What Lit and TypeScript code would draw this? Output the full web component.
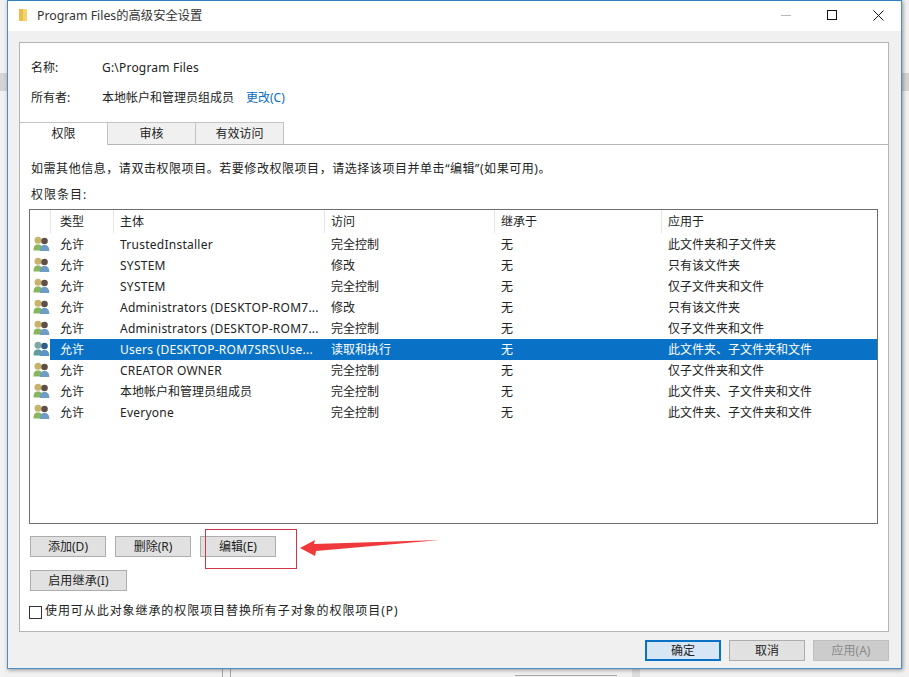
import { LitElement, html, css, svg } from "lit";
import { customElement } from "lit/decorators.js";

const rows = [
  ["允许", "TrustedInstaller", "完全控制", "无", "此文件夹和子文件夹"],
  ["允许", "SYSTEM", "修改", "无", "只有该文件夹"],
  ["允许", "SYSTEM", "完全控制", "无", "仅子文件夹和文件"],
  ["允许", "Administrators (DESKTOP-ROM7...", "修改", "无", "只有该文件夹"],
  ["允许", "Administrators (DESKTOP-ROM7...", "完全控制", "无", "仅子文件夹和文件"],
  ["允许", "Users (DESKTOP-ROM7SRS\\Use...", "读取和执行", "无", "此文件夹、子文件夹和文件"],
  ["允许", "CREATOR OWNER", "完全控制", "无", "仅子文件夹和文件"],
  ["允许", "本地帐户和管理员组成员", "完全控制", "无", "此文件夹、子文件夹和文件"],
  ["允许", "Everyone", "完全控制", "无", "此文件夹、子文件夹和文件"],
];

const userIcon = (sel: boolean) => svg`<svg class="uicon" width="17" height="16" viewBox="0 0 17 16">
  <circle cx="5" cy="4.300" r="3.500" fill="${sel ? "#7fa8a0" : "#c9b26a"}"/>
  <path d="M0.500 14.500c0-4.500 1.500-6 4.500-6s4.500 1.500 4.500 6z" fill="${sel ? "#5f9c9c" : "#86b75c"}"/>
  <circle cx="11.500" cy="5" r="3.300" fill="${sel ? "#2f5f88" : "#5e5048"}"/>
  <path d="M6.800 15c0-4.300 1.700-6 4.700-6s4.800 1.700 4.800 6z" fill="${sel ? "#5a94c8" : "#6f9cc4"}"/>
</svg>`;

@customElement("app-root")
export class AppRoot extends LitElement {
  static styles = css`
    :host {
      display: block;
      position: relative;
      width: 909px;
      height: 677px;
      overflow: hidden;
      background: #f1f1f1;
      font-family: "Noto Sans", "Noto Sans CJK SC", sans-serif;
      font-size: 12px;
      color: #222;
    }
    .bg { position: absolute; background: #d4d4d4; }
    .bg.left { left: 0; top: 73px; width: 7px; height: 18px; }
    .bg.right { right: 0; top: 73px; width: 7px; height: 18px; }
    .bg.v1 { left: 222px; top: 669px; width: 1px; height: 8px; background: #a8a8a8; }
    .bg.v2 { left: 230px; top: 669px; width: 1px; height: 8px; background: #a8a8a8; }
    .bg.v3 { left: 632px; top: 669px; width: 8px; height: 8px; background: #dcdcdc; }
    .bg.h1 { left: 515px; top: 675px; width: 102px; height: 1px; background: #a8a8a8; }
    .window {
      position: relative;
      box-sizing: border-box;
      margin-left: 7px;
      width: 895px;
      height: 669px;
      background: #f0f0f0;
      border: 1px solid #4a8fc8;
      border-top-color: #2f7fbf;
      box-shadow: 1px 1px 4px rgba(0, 0, 0, 0.4);
      display: flex;
      flex-direction: column;
    }
    .title {
      height: 30px;
      background: #fff;
      display: flex;
      align-items: center;
      padding-left: 10px;
      flex: none;
    }
    .title .name { margin-left: 9px; font-size: 12.3px; color: #333; position: relative; top: -1px; }
    .folder { position: relative; top: -1px; }
    .controls { margin-left: auto; display: flex; align-items: center; position: relative; top: -1px; }
    .ctrl { width: 46px; height: 30px; display: flex; align-items: center; justify-content: center; }
    .body {
      flex: 1;
      padding: 11px 12px 0 11px;
      display: flex;
      flex-direction: column;
    }
    .panel {
      box-sizing: border-box;
      height: 590px;
      flex: none;
      background: #fff;
      border: 1px solid #b4b4b4;
      display: flex;
      flex-direction: column;
    }
    .info {
      display: grid;
      grid-template-columns: 71px auto;
      justify-content: start;
      align-content: start;
      row-gap: 13px;
      padding: 16px 0 0 11px;
      height: 65px;
      box-sizing: border-box;
      line-height: 17px;
      flex: none;
    }
    .info .path { letter-spacing: 0.2px; }
    .info .link { color: #0a6cc4; margin-left: 12px; }
    .tabs {
      display: flex;
      height: 22px;
      margin-top: 14px;
      border-bottom: 1px solid #b4b4b4;
      box-sizing: content-box;
      flex: none;
    }
    .tab {
      box-sizing: border-box;
      width: 88px;
      height: 22px;
      background: #f0f0f0;
      border: 1px solid #c4c4c4;
      border-bottom: none;
      border-left: none;
      text-align: center;
      line-height: 21px;
    }
    .tab.active {
      background: #fff;
      height: 23px;
      border-top: 1px solid #c4c4c4;
      position: relative;
      z-index: 1;
    }
    .content {
      flex: 1;
      display: flex;
      flex-direction: column;
      padding: 15px 10px 0 9px;
    }
    .hint { line-height: 17px; margin-left: 2px; letter-spacing: 0.55px; white-space: nowrap; }
    .label { line-height: 17px; margin: 9px 0 0 2px; letter-spacing: 1px; }
    .list {
      box-sizing: border-box;
      height: 315px;
      margin-top: 6px;
      border: 1px solid #6e6e6e;
      background: #fff;
      flex: none;
    }
    .row {
      display: grid;
      grid-template-columns: 20px 63px 211px 170px 167px 1fr;
      height: 21px;
      line-height: 21px;
      white-space: nowrap;
    }
    .head { height: 23px; line-height: 23px; margin-bottom: 1px; }
    .head .cell { border-left: 1px solid #e5e5e5; height: 23px; box-sizing: border-box; }
    .head .blank { border: none; }
    .cell { padding-left: 7px; overflow: hidden; }
    .cell.first { padding-left: 10px; }
    .cell.latin { letter-spacing: 0.25px; }
    .head .cell { padding-left: 6px; }
    .head .cell.first { padding-left: 9px; }
    .iconcell { padding: 2px 0 0 3px; box-sizing: border-box; }
    .uicon { display: block; }
    .row.sel .cell { background: #0a72c6; color: #fff; }
    .actions { display: flex; gap: 9px; margin: 12px 0 0 1px; }
    .btn {
      box-sizing: border-box;
      width: 76px;
      height: 21px;
      background: #e1e1e1;
      border: 1px solid #adadad;
      text-align: center;
      line-height: 19px;
      flex: none;
    }
    .wide { width: 97px; margin: 13px 0 0 1px; letter-spacing: 0.2px; }
    .check { display: flex; align-items: center; margin-top: 11px; line-height: 17px; letter-spacing: 0.93px; white-space: nowrap; }
    .box {
      width: 13px;
      height: 13px;
      box-sizing: border-box;
      border: 1px solid #333;
      background: #fff;
      margin: 3px 3px 0 0;
      flex: none;
    }
    .footer { display: flex; justify-content: flex-end; gap: 8px; margin-top: 8px; }
    .btn.primary { border: 2px solid #0a72c6; line-height: 17px; background: #d6e6f4; }
    .btn.disabled { color: #8a8a8a; background: #ccc; border-color: #bfbfbf; }
    .annot { position: absolute; left: 205px; top: 529px; width: 92px; height: 40px; box-sizing: border-box; border: 1px solid #d2354a; pointer-events: none; }
    .arrow { position: absolute; left: 298px; top: 536px; pointer-events: none; }
  `;

  render() {
    return html`
      <div class="bg left"></div>
      <div class="bg right"></div>
      <div class="bg v1"></div>
      <div class="bg v2"></div>
      <div class="bg v3"></div>
      <div class="bg h1"></div>
      <div class="window">
        <div class="title">
          <svg class="folder" width="10" height="14" viewBox="0 0 10 14">
            <path d="M1 1h7l1 1v11H1z" fill="#f3d36a"/>
            <path d="M1 1h4v12H1z" fill="#e8bd4a"/>
          </svg>
          <span class="name">Program Files的高级安全设置</span>
          <div class="controls">
            <div class="ctrl"><svg width="10" height="10" viewBox="0 0 10 10"><path d="M0 5.500h10" stroke="#b8b8b8"/></svg></div>
            <div class="ctrl"><svg width="10" height="10" viewBox="0 0 10 10"><rect x=".5" y=".5" width="9" height="9" fill="none" stroke="#111"/></svg></div>
            <div class="ctrl"><svg width="11" height="11" viewBox="0 0 11 11"><path d="M.5.5l10 10M10.500.5l-10 10" stroke="#111" fill="none"/></svg></div>
          </div>
        </div>
        <div class="body">
          <div class="panel">
            <div class="info">
              <span>名称:</span><span class="path">G:\\Program Files</span>
              <span>所有者:</span><span>本地帐户和管理员组成员<span class="link">更改(C)</span></span>
            </div>
            <div class="tabs">
              <div class="tab active">权限</div>
              <div class="tab">审核</div>
              <div class="tab">有效访问</div>
            </div>
            <div class="content">
              <div class="hint">如需其他信息，请双击权限项目。若要修改权限项目，请选择该项目并单击“编辑”(如果可用)。</div>
              <div class="label">权限条目:</div>
              <div class="list">
                <div class="row head">
                  <div class="cell blank"></div>
                  <div class="cell first">类型</div>
                  <div class="cell">主体</div>
                  <div class="cell">访问</div>
                  <div class="cell">继承于</div>
                  <div class="cell">应用于</div>
                </div>
                ${rows.map((r, i) => html`
                  <div class="row ${i === 5 ? "sel" : ""}">
                    <div class="iconcell">${userIcon(i === 5)}</div>
                    <div class="cell first">${r[0]}</div>
                    <div class="cell ${/[A-Za-z]/.test(r[1]) ? "latin" : ""}">${r[1]}</div>
                    <div class="cell">${r[2]}</div>
                    <div class="cell">${r[3]}</div>
                    <div class="cell">${r[4]}</div>
                  </div>`)}
              </div>
              <div class="actions">
                <div class="btn">添加(D)</div>
                <div class="btn">删除(R)</div>
                <div class="btn">编辑(E)</div>
              </div>
              <div class="btn wide">启用继承(I)</div>
              <div class="check"><span class="box"></span><span>使用可从此对象继承的权限项目替换所有子对象的权限项目(P)</span></div>
            </div>
          </div>
          <div class="footer">
            <div class="btn primary">确定</div>
            <div class="btn">取消</div>
            <div class="btn disabled">应用(A)</div>
          </div>
        </div>
      </div>
      <div class="annot"></div>
      <svg class="arrow" width="146" height="22" viewBox="0 0 146 22">
        <path d="M2 12L17 4L16 8L142 4L18 15L17 20z" fill="#f0393a"/>
      </svg>
    `;
  }
}
